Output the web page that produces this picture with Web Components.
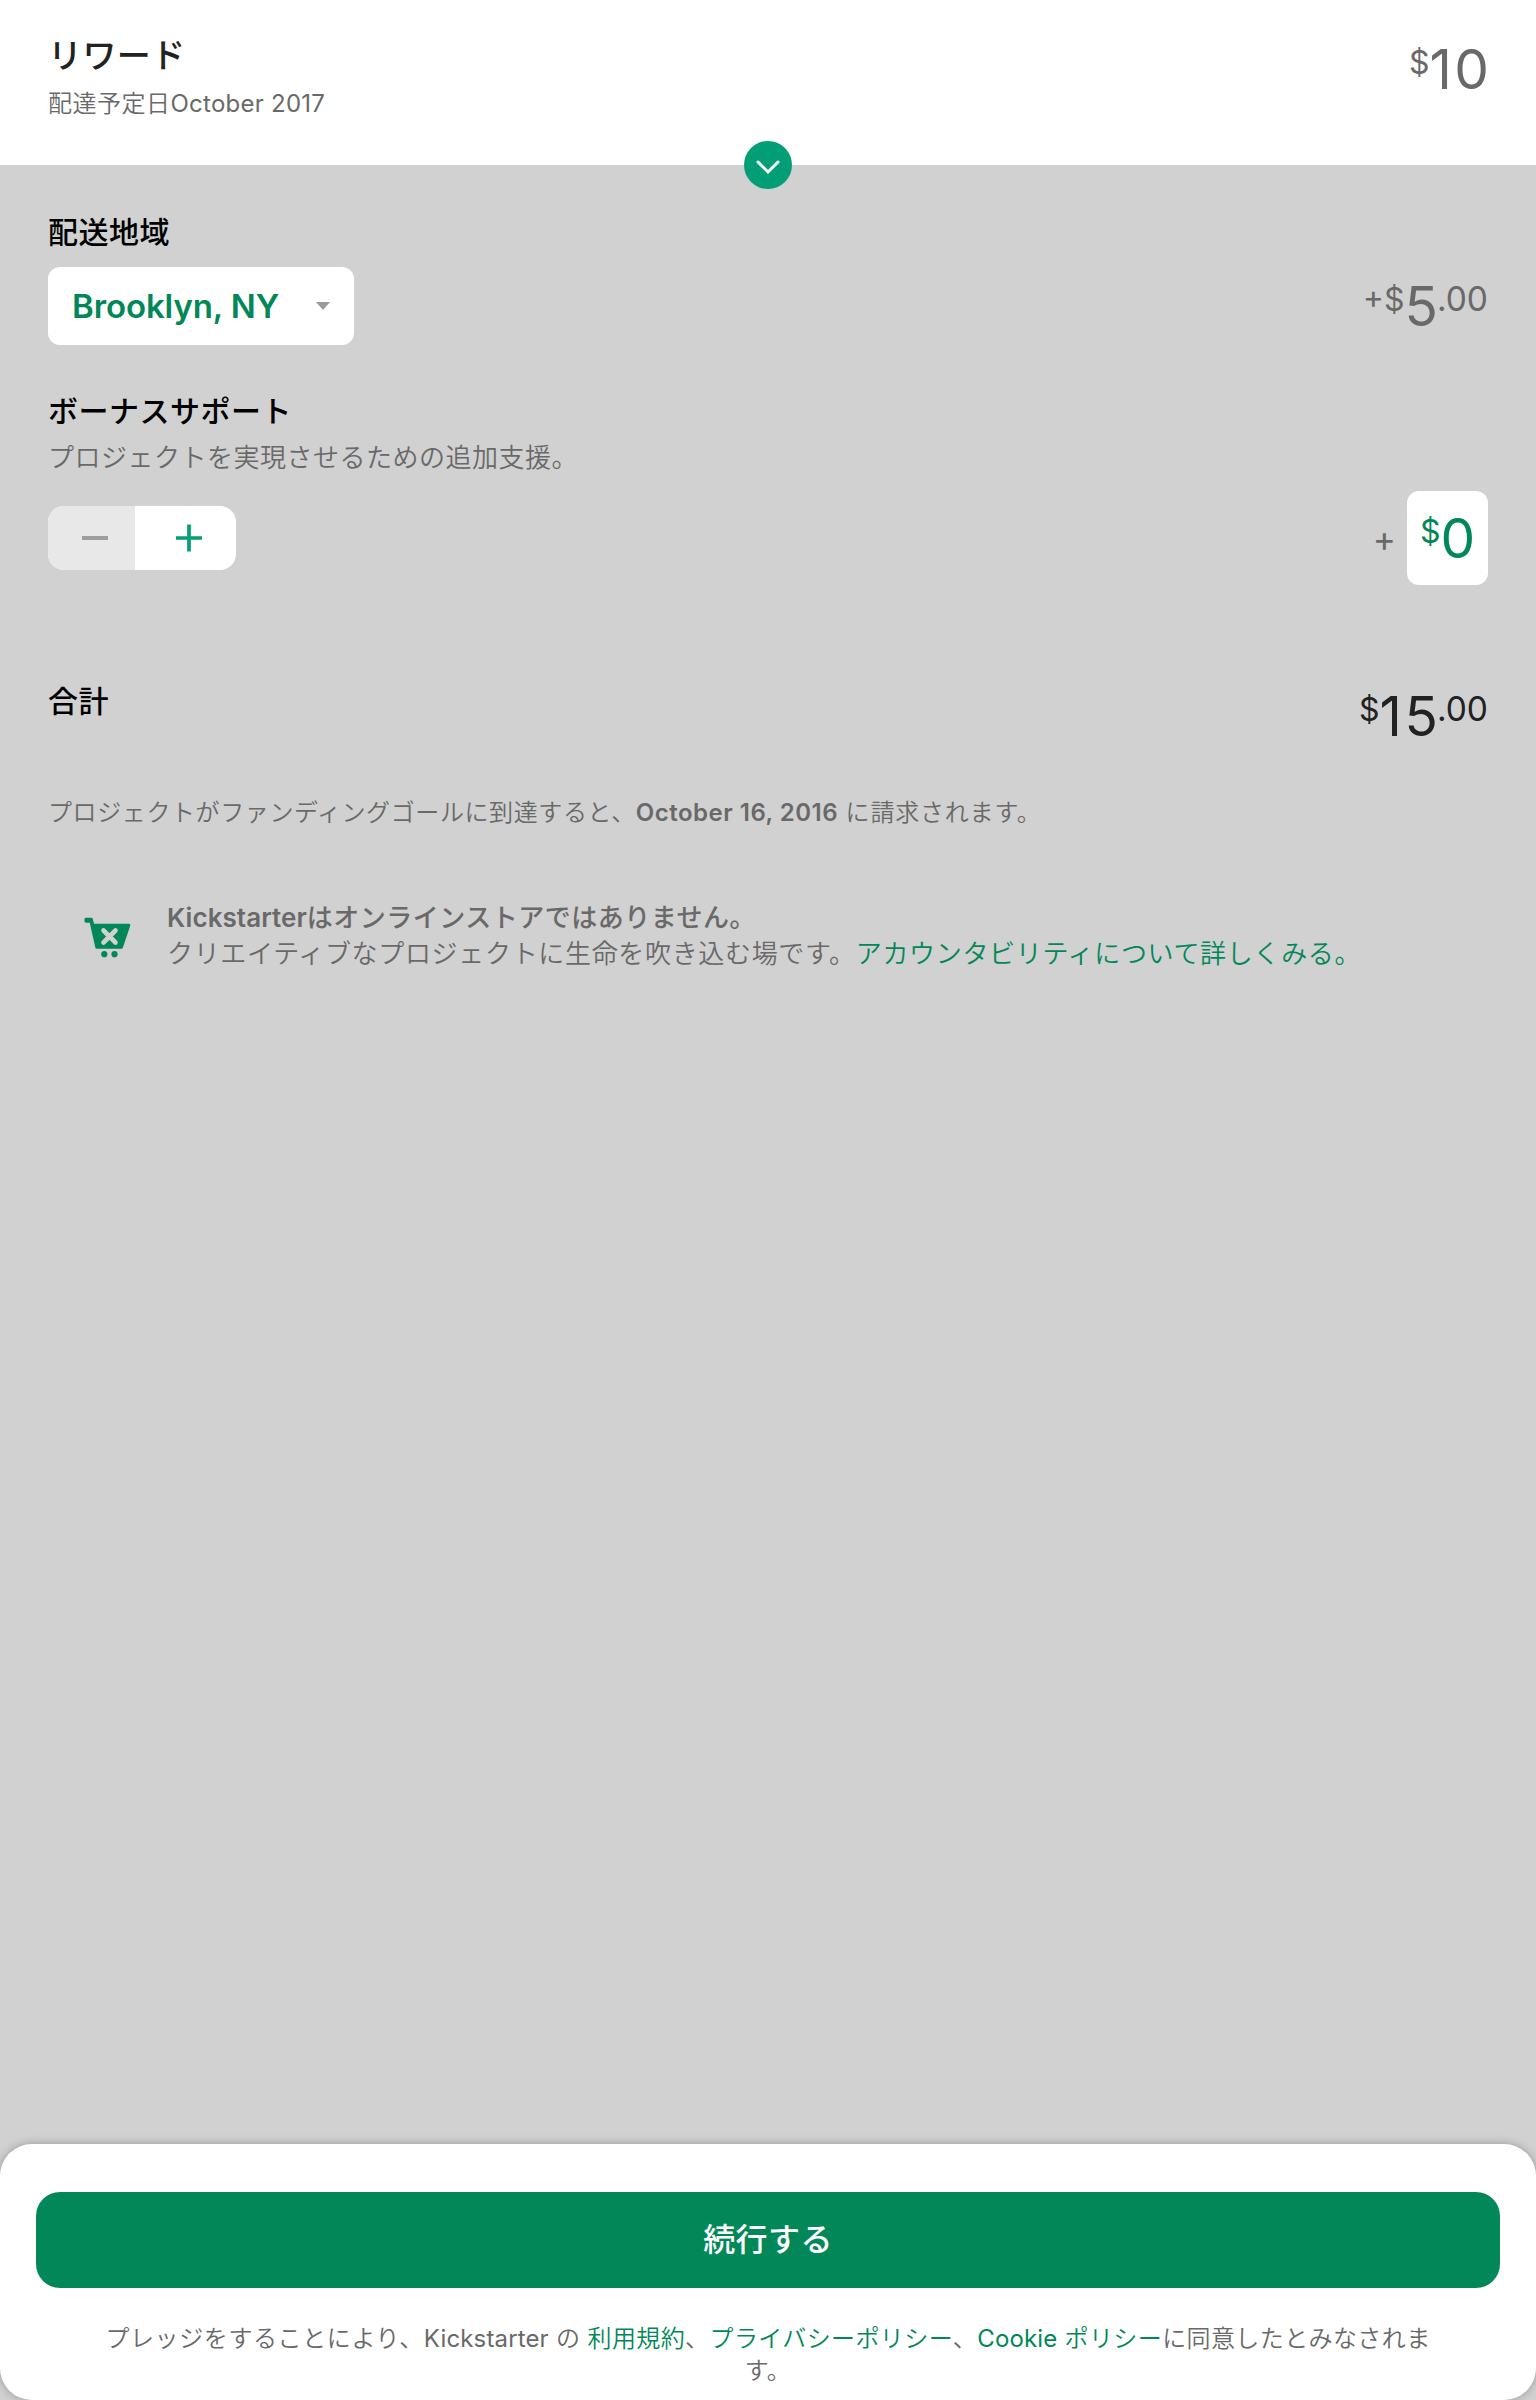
<!DOCTYPE html>
<html lang="ja">
<head>
<meta charset="utf-8">
<title>リワード</title>
<style>
html,body{margin:0;height:100%}
body{font-family:Inter,"Noto Sans CJK JP",sans-serif;background:#d1d1d1;color:#696969;font-kerning:normal}
</style>
</head>
<body>
<pledge-page></pledge-page>
<script>
const define = (name, css, html) => {
  const t = document.createElement('template');
  t.innerHTML = `<style>*{box-sizing:border-box}${css}</style>${html}`;
  customElements.define(name, class extends HTMLElement {
    constructor() {
      super();
      this.attachShadow({mode: 'open'}).append(t.content.cloneNode(true));
    }
  });
};

define('ks-money', `
  :host{display:flex;align-items:flex-start;white-space:nowrap;color:#696969}
  .big{font-size:55px;line-height:55px;letter-spacing:-1px}
  ::slotted([slot]){display:block;font-size:33.5px;line-height:33px;margin-top:4px}
  ::slotted([slot=pre]){font-size:32px}
  ::slotted(.one){letter-spacing:2.5px}
`, `<slot name="pre"></slot><span class="big"><slot></slot></span><slot name="cents"></slot>`);

define('ks-toggle', `
  :host{display:block;width:48px;height:48px}
  svg{display:block}
`, `<svg width="48" height="48" viewBox="0 0 48 48"><circle cx="24" cy="24" r="24" fill="#029f76"/><path d="M14 21 24 31 34 21" fill="none" stroke="#fff" stroke-width="3" stroke-linecap="round"/></svg>`);

define('reward-header', `
  :host{display:flex;justify-content:space-between;align-items:flex-start;height:165px;padding:36px 48px 0;background:#fff;position:relative}
  .title{font-size:34px;line-height:40px;font-weight:500;color:#222;letter-spacing:.4px}
  .sub{font-size:24px;line-height:32px;margin-top:12px;letter-spacing:.5px;font-weight:350}
  .l{font-weight:400;letter-spacing:.25px}
  ks-toggle{position:absolute;left:744px;top:141px}
  ks-money{margin-top:6px}
`, `<div><div class="title">リワード</div><div class="sub">配達予定日<span class="l">October 2017</span></div></div>
<ks-money><span slot="pre">$</span><span class="one">1</span>0</ks-money><ks-toggle></ks-toggle>`);

define('ks-select', `
  :host{display:flex;align-items:center;justify-content:space-between;width:306px;height:78px;padding:0 24px 0 24px;border-radius:12px;background:#fff;color:#028858;font-size:33px;line-height:40px;font-weight:600;letter-spacing:-.1px}
`, `<slot></slot><svg width="14" height="8" viewBox="0 0 14 8"><path d="M0 0H14L7 8Z" fill="#999c9c"/></svg>`);

define('ks-stepper', `
  :host{display:flex;width:188px;height:64px;border-radius:16px;overflow:hidden;background:#fff}
  svg{display:block}
`, `<svg width="188" height="64" viewBox="0 0 188 64"><path d="M0 0H87V64H0Z" fill="#e8e8e8"/><path d="M34 32H60" stroke="#9e9e9e" stroke-width="4"/><path d="M128 32H154M141 18.5V45.5" stroke="#029f76" stroke-width="3.7"/></svg>`);

define('ks-amount', `
  :host{display:flex;align-items:center;gap:11px;font-size:35px;line-height:40px}
  .box{display:flex;justify-content:center;width:81px;height:94px;border-radius:12px;background:#fff;padding:20px 1px 0 0}
  ks-money{color:#028858}
`, `<span>+</span><div class="box"><ks-money><span slot="pre">$</span>0</ks-money></div>`);

define('pledge-section', `
  :host{display:block}
  .label{font-size:30px;line-height:40px;font-weight:500;color:#000;letter-spacing:.5px}
  .row{display:flex;justify-content:space-between}
`, `<div class="label"><slot name="label"></slot></div><slot name="hint"></slot><div class="row"><slot></slot></div>`);

define('cart-icon', `
  :host{display:block;width:47px;height:42px}
  svg{display:block}
`, `<svg width="47" height="42" viewBox="0 0 47 42"><path d="M2 2H7.5L9 8H45.5L38 30.5H13L7 4H2Z" fill="#028858" stroke="#028858" stroke-width="3" stroke-linejoin="round" transform="translate(0 .3) scale(.985)"/><path d="M19.5 13.5 31.5 25.5M31.5 13.5 19.5 25.5" stroke="#d1d1d1" stroke-width="4.6" stroke-linecap="round"/><circle cx="20.3" cy="37.2" r="3.1" fill="#028858"/><circle cx="30.5" cy="37.2" r="3.1" fill="#028858"/></svg>`);

define('store-notice', `
  :host{display:flex;gap:36px;padding-left:36px;font-size:26px;line-height:36px;font-weight:350}
  cart-icon{margin-top:17px}
`, `<cart-icon></cart-icon><div><slot></slot></div>`);

define('pledge-footer', `
  :host{display:block;height:256px;border-radius:32px;background:#fff;padding:48px 36px 0;box-shadow:0 0 10px rgba(0,0,0,.28)}
  button{display:block;width:100%;height:96px;border:0;border-radius:24px;background:#028858;color:#fff;font:500 32px/40px Inter,"Noto Sans CJK JP",sans-serif;letter-spacing:.4px;padding:0}
  .terms{margin-top:35px;font-size:24px;line-height:32px;text-align:center;letter-spacing:.4px;font-weight:350}
  .lead{letter-spacing:.6px}
  .l{font-weight:400;letter-spacing:.15px}
  a{color:#028858;text-decoration:none}
`, `<button>続行する</button><div class="terms"><span class="lead">プレッジをすることにより、</span><span class="l">Kickstarter</span> の <a>利用規約</a>、<a>プライバシーポリシー</a>、<a><span class="l">Cookie</span> ポリシー</a>に同意したとみなされま<br>す。</div>`);

define('pledge-page', `
  :host{display:flex;flex-direction:column;height:2400px;background:#d1d1d1}
  main{flex:1;padding:47px 48px 0}
  ks-select{margin-top:15px}
  .ship{margin-top:27px}
  .bonus{margin-top:46px}
  .hint{font-size:26px;line-height:36px;margin:9px 0 15px;letter-spacing:.5px;font-weight:350}
  ks-stepper{margin-top:15px}
  .total{display:flex;justify-content:space-between;height:62px;margin-top:96px}
  .total ks-money{color:#222;margin-top:8px}
  .charge{font-size:24px;line-height:32px;margin-top:54px;letter-spacing:.6px;font-weight:350}
  .charge b{letter-spacing:.5px}
  .tail{letter-spacing:.8px}
  store-notice{margin-top:71px;letter-spacing:.67px}
  b{font-weight:600}
  store-notice b{letter-spacing:.05px}
  .jb{font-weight:500;letter-spacing:.5px}
  a{color:#028858}
`, `<reward-header></reward-header>
<main>
<pledge-section><span slot="label">配送地域</span><ks-select>Brooklyn, NY</ks-select><ks-money class="ship"><span slot="pre">+$</span>5<span slot="cents">.00</span></ks-money></pledge-section>
<pledge-section class="bonus"><span slot="label">ボーナスサポート</span><div slot="hint" class="hint">プロジェクトを実現させるための追加支援。</div><ks-stepper></ks-stepper><ks-amount></ks-amount></pledge-section>
<div class="total"><pledge-section><span slot="label">合計</span></pledge-section><ks-money><span slot="pre">$</span><span class="one">1</span>5<span slot="cents">.00</span></ks-money></div>
<div class="charge">プロジェクトがファンディングゴールに到達すると、<b>October 16, 2016</b><span class="tail"> に請求されます。</span></div>
<store-notice><b>Kickstarter</b><span class="jb">はオンラインストアではありません。</span><br>クリエイティブなプロジェクトに生命を吹き込む場です。<a>アカウンタビリティについて詳しくみる。</a></store-notice>
</main>
<pledge-footer></pledge-footer>`);
</script>
</body>
</html>
